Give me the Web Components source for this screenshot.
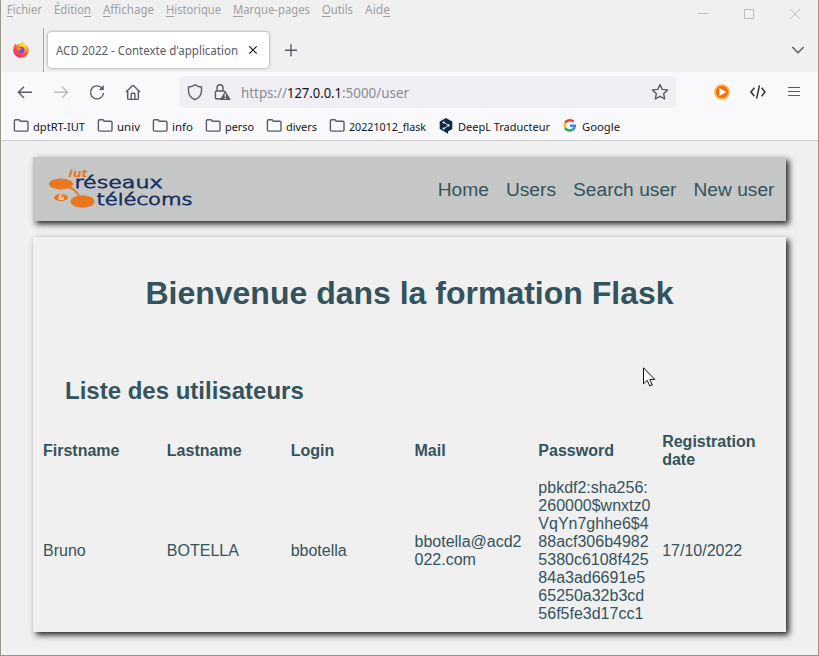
<!DOCTYPE html>
<html lang="fr">
<head>
<meta charset="utf-8">
<title>ACD 2022 - Contexte d'application</title>
<style>
html,body{margin:0;height:100%;overflow:hidden;background:#f0f0f0}
</style>
</head>
<body>
<app-window></app-window>
<script>
const define = (name, html, after) => {
  const tpl = document.createElement('template');
  tpl.innerHTML = html;
  customElements.define(name, class extends HTMLElement {
    connectedCallback() {
      if (this.shadowRoot) return;
      this.attachShadow({mode: 'open'}).append(tpl.content.cloneNode(true));
      if (after) after(this, this.shadowRoot);
    }
  });
};

/* Text run condensed or stretched to the width given by its "w" attribute */
define('fit-text', `<style>
:host{display:inline-block;white-space:pre;flex:none}
span{display:inline-block;transform-origin:0 50%;white-space:pre}
</style><span><slot></slot></span>`, (el, root) => {
  const s = root.querySelector('span');
  const w = +el.getAttribute('w');
  const n = s.getBoundingClientRect().width;
  if (n) s.style.transform = `scaleX(${w / n})`;
  el.style.width = w + 'px';
});

const icons = {
  firefox: [18, `<defs><radialGradient id="g" cx=".72" cy=".15" r=".95"><stop offset="0" stop-color="#fff04a"/><stop offset=".35" stop-color="#ffb02c"/><stop offset=".65" stop-color="#ff5634"/><stop offset="1" stop-color="#f01c80"/></radialGradient></defs><g stroke="none"><path fill="url(#g)" d="M2.6 4 L3.4 2.6 L4.3 4.2 Q6 2.7 8.2 3 Q9.3 1 11.4.6 Q11.4 2.4 13 3.4 L14 4.7 L14.3 3.6 Q17.3 6.8 16.6 10.5 Q15.2 16.6 9 16.7 Q2.8 16.3 1.3 10.7 Q.7 7.4 2.6 4Z"/><circle cx="9.2" cy="9" r="3.300" fill="#7950d8"/><path d="M4.800 7 Q7.500 6 9.600 7.800 Q7.600 8.200 7.400 9.700 Q5.800 9.700 4.800 7Z" fill="#ff9632"/></g>`],
  back: [18, `<path d="M16 9.3H2.5M8 3.7 2.4 9.3 8 14.9"/>`],
  forward: [18, `<path d="M2 9.3h13.5M10 3.7l5.6 5.6-5.6 5.6"/>`],
  reload: [18, `<path d="M14.6 6A6.5 6.5 0 1 0 15.5 10"/><path d="M15.8 2v5h-5z" fill="currentColor" stroke="none"/>`],
  home: [18, `<path d="M2 9.1 8.3 2.8Q9 2.2 9.7 2.8L16 9.1M3.7 8v7.7q0 .7.7.7h9.2q.7 0 .7-.7V8M7.2 16.2v-5q0-1 1-1h1.7q1 0 1 1v5"/>`],
  shield: [18, `<path d="M9 1.7Q11.5 3.7 15.5 4V8Q15.2 14 9 16.7 2.8 14 2.5 8V4Q6.5 3.7 9 1.7Z"/>`],
  lock: [18, `<path d="M9 15.8H3.4q-1 0-1-1V9q0-1 1-1h7.2q1 0 1 1M4 8V4.8a3 3 0 0 1 6 0V8"/><path d="M12.300 7.700 17.800 17H6.800z" fill="currentColor" stroke="none"/><path d="M12.300 10.700v3m0 1v1.200" stroke="#f0f0f4"/>`],
  star: [18, `<path stroke-linejoin="round" d="m9 1.5 2.2 4.900 5.400.6-4 3.700 1.100 5.300L9 13.300 4.300 16l1.100-5.300-4-3.700 5.400-.6z"/>`],
  play: [18, `<circle cx="9" cy="9" r="7.8" fill="#ffb44b" stroke="none"/><circle cx="9" cy="9" r="6.1" fill="#fa6b08" stroke="none"/><path d="M6.3 5 13.4 9 6.3 13z" fill="#fff" stroke="none"/>`],
  code: [18, `<path stroke-width="1.5" d="M5.4 4.8 2 9l3.4 4.2M12.6 4.8 16 9l-3.4 4.2M10.5 2.3 7.6 15.7"/>`],
  menu: [18, `<path stroke-width="1.2" d="M3 4.500h12M3 8.500h12M3 12.500h12"/>`],
  folder: [16, `<path d="M1.4 3Q1.4 1.700 2.600 1.700h3q.8 0 1.100.7l.5.8h6.500q1.300 0 1.300 1.300v7.400q0 1.200-1.300 1.200H2.700q-1.300 0-1.300-1.200z"/>`],
  deepl: [16, `<path d="M8 0 14.300 3.500v7.600L10 13.500l.2 2.400L8 14.600 1.700 11V3.500z" fill="#0f2b46" stroke="none"/><path d="m5.700 4.400 5 3-5 3.200" stroke="#fff" stroke-width=".8"/><g fill="#fff" stroke="none"><circle cx="5.700" cy="4.500" r="1.100"/><circle cx="10.600" cy="7.400" r="1.100"/><circle cx="5.700" cy="10.500" r="1.100"/></g>`],
  google: [16, `<g stroke-width="2.5"><path stroke="#ea4335" d="M3.1 4.7Q4.7 2.2 8 2.2q2.1 0 3.7 1.4"/><path stroke="#fbbc05" d="M3.1 4.7Q1.8 7.3 3.1 9.8"/><path stroke="#34a853" d="M3.1 9.8Q4.7 12.4 8 12.4q2.1 0 3.5-1.1"/><path stroke="#4285f4" d="M11.5 11.3Q12.8 10 12.8 7.8H8"/></g>`],
  plus: [18, `<path d="M9 3.3v12M3 9.3h12"/>`],
  close: [14, `<path stroke="#15141a" stroke-width="1.2" d="m3.3 3.3 7.4 7.4M10.7 3.3l-7.4 7.4"/>`],
  chevron: [16, `<path stroke-width="1.5" d="m2.3 5 5.7 5.7L13.7 5"/>`],
  min: [12, `<path stroke-width="1" d="M1 5.5h10"/>`],
  max: [12, `<path stroke-width="1" d="M1.5 1.5h9v9h-9z"/>`],
  exit: [12, `<path stroke-width="1" d="m1 1 10 10M11 1 1 11"/>`],
};
define('ui-icon', `<style>:host{display:block;flex:none;color:#5b5b66}svg{display:block;overflow:visible}</style>`, (el, root) => {
  const [s, body] = icons[el.getAttribute('name')];
  root.innerHTML += `<svg width="${s}" height="${s}" viewBox="0 0 ${s} ${s}" fill="none" stroke="currentColor" stroke-width="1.4">${body}</svg>`;
});

define('menu-bar', `<style>
:host{display:flex;height:28px;box-sizing:border-box;padding:0 17px 0 6px;justify-content:space-between;color:#a0a0a0;font:12px/20px "Noto Sans",sans-serif}
.items{display:flex;gap:12px}
u{text-decoration-thickness:1px;text-underline-offset:2px}
.win{display:flex;gap:34px;padding-top:8px}
.win ui-icon{color:#bcbcbc}
</style>
<div class="items"><fit-text w="35"><u>F</u>ichier</fit-text><fit-text w="37">Éditio<u>n</u></fit-text><fit-text w="51"><u>A</u>ffichage</fit-text><fit-text w="55"><u>H</u>istorique</fit-text><fit-text w="77"><u>M</u>arque-pages</fit-text><fit-text w="31"><u>O</u>utils</fit-text><fit-text w="25">Aid<u>e</u></fit-text></div>
<div class="win"><ui-icon name="min"></ui-icon><ui-icon name="max"></ui-icon><ui-icon name="exit"></ui-icon></div>`);

define('tab-strip', `<style>
:host{display:flex;height:44px;align-items:center;color:#5b5b66;font:12px/18px "Noto Sans",sans-serif}
.pin{width:43px;height:44px;box-sizing:border-box;border-right:1px solid #aaa;display:grid;place-items:center}
.pin ui-icon{margin-left:-3px}
.tab{width:221px;height:36px;box-sizing:border-box;margin-left:4px;background:#fff;border-radius:4px;box-shadow:0 0 3px rgba(0,0,0,.45);display:flex;align-items:center;padding:0 9px 0 8px;justify-content:space-between}
.tab fit-text{padding-top:2px}
.plus{margin-left:13px}
.list{margin-left:auto;margin-right:12px}
</style>
<div class="pin"><ui-icon name="firefox"></ui-icon></div>
<div class="tab"><fit-text w="182">ACD 2022 - Contexte d'application</fit-text><ui-icon name="close"></ui-icon></div>
<ui-icon class="plus" name="plus"></ui-icon><ui-icon class="list" name="chevron"></ui-icon>`);

define('nav-bar', `<style>
:host{display:flex;height:40px;align-items:center;background:#f9f9fb;padding:0 15px;color:#8b8a94;font:14px/20px "Noto Sans",sans-serif}
.btns{display:flex;gap:18px}
.off{color:#bdbdc2}
.url{width:497px;height:32px;box-sizing:border-box;background:#f0f0f4;border-radius:4px;margin-left:37px;padding:0 7px;display:flex;align-items:center;gap:9px}
.addr{display:flex;flex:1;padding:2px 0 0 1px}
b{font-weight:400;color:#15141a}
.tools{display:flex;gap:18px;margin-left:auto}
.dark{color:#333}
</style>
<div class="btns"><ui-icon name="back"></ui-icon><ui-icon class="off" name="forward"></ui-icon><ui-icon name="reload"></ui-icon><ui-icon name="home"></ui-icon></div>
<div class="url"><ui-icon name="shield"></ui-icon><ui-icon name="lock"></ui-icon><div class="addr"><fit-text w="46">https://</fit-text><fit-text w="55"><b>127.0.0.1</b></fit-text><fit-text w="67">:5000/user</fit-text></div><ui-icon name="star"></ui-icon></div>
<div class="tools"><ui-icon name="play"></ui-icon><ui-icon class="dark" name="code"></ui-icon><ui-icon name="menu"></ui-icon></div>`);

define('book-mark', `<style>:host{display:flex;align-items:center;gap:4px}::slotted(fit-text){padding-top:2px}</style><slot name="icon"></slot><slot></slot>`);

const marks = [['folder','dptRT-IUT',52],['folder','univ',23],['folder','info',21],['folder','perso',29],['folder','divers',31],['folder','20221012_flask',77],['deepl','DeepL Traducteur',92],['google','Google',38]];
define('bookmarks-bar', `<style>
:host{display:flex;height:29px;box-sizing:border-box;padding:1px 12px 2px;gap:12px;align-items:center;background:#f9f9fb;border-bottom:1px solid #ccc;color:#15141a;font:11.6px/18px "Noto Sans",sans-serif}
</style>`, (el, root) => {
  root.innerHTML += marks.map(([i, t, w]) => `<book-mark><ui-icon slot="icon" name="${i}"></ui-icon><fit-text w="${w}">${t}</fit-text></book-mark>`).join('');
});

define('rt-logo', `<style>:host{display:block}svg{display:block}text{font-family:"DejaVu Sans",sans-serif}.thin{font-weight:200}</style>
<svg width="148" height="44" viewBox="47 167 148 44">
<g fill="#e87722"><ellipse cx="61" cy="184" rx="12" ry="5.4"/><ellipse cx="82.500" cy="201.500" rx="12" ry="6.200"/><ellipse cx="61" cy="197.500" rx="7" ry="3.600"/>
<path d="M68 187 Q76 189 80 198" fill="none" stroke="#e87722" stroke-width="2"/>
<text x="68.500" y="177" font-size="10" font-weight="bold" font-style="italic" textLength="19" lengthAdjust="spacingAndGlyphs">iut</text></g>
<text x="58" y="200.300" font-size="7.500" font-weight="bold" fill="#ddd" textLength="6.500" lengthAdjust="spacingAndGlyphs">&amp;</text>
<g class="thin" fill="#1c3263" stroke="#1c3263" stroke-width=".9"><text x="74.500" y="188.200" font-size="15" textLength="88" lengthAdjust="spacingAndGlyphs">réseaux</text>
<text x="96.500" y="205.200" font-size="15" textLength="96" lengthAdjust="spacingAndGlyphs">télécoms</text></g>
</svg>`);

define('site-header', `<style>
:host{display:flex;height:64px;box-sizing:border-box;align-items:center;justify-content:space-between;padding:0 11.500px 0 14px;background:#c5c7c6;box-shadow:3px 3px 6px #222;font-size:19.2px}
nav{display:flex;gap:17px;padding-top:2px}
</style><rt-logo></rt-logo><nav><span>Home</span><span>Users</span><span>Search user</span><span>New user</span></nav>`);

define('user-table', `<style>
:host{display:grid;grid-template-columns:repeat(6,1fr);column-gap:10px;row-gap:10px;align-items:center;font-size:16px;line-height:18px;word-break:break-all}
b{word-break:normal}
</style>
<b>Firstname</b><b>Lastname</b><b>Login</b><b>Mail</b><b>Password</b><b>Registration date</b>
<span>Bruno</span><span>BOTELLA</span><span>bbotella</span><span>bbotella@acd2022.com</span><span>pbkdf2:sha256:260000$wnxtz0VqYn7ghhe6$488acf306b49825380c6108f42584a3ad6691e565250a32b3cd56f5fe3d17cc1</span><span>17/10/2022</span>`);

define('site-main', `<style>
:host{display:block;height:395px;box-sizing:border-box;margin-top:16px;padding:38px 10px 0;background:#f0f0f0;box-shadow:3px 3px 6px #222}
h1{margin:0;font-size:32px;line-height:36px;text-align:center}
h2{margin:66px 0 28px 22px;font-size:24px;line-height:28px}
</style><h1>Bienvenue dans la formation Flask</h1><h2>Liste des utilisateurs</h2><user-table></user-table>`);

define('mouse-pointer', `<style>:host{position:absolute;left:642px;top:367px}svg{display:block}</style>
<svg width="13" height="20"><path d="M.5.8v16l3.700-3.500 2.600 5.700 2.500-1-2.500-5.600h5z" fill="#fff" stroke="#111" stroke-width="1"/></svg>`);

define('app-window', `<style>
:host{display:block;position:relative;width:819px;height:656px;box-sizing:border-box;border:solid #99968a;border-width:0 1px 1px;background:#f0f0f0}
.page{padding:16px 32px 0;color:#34535c;font-family:"Liberation Sans",Arial,sans-serif}
</style>
<menu-bar></menu-bar><tab-strip></tab-strip><nav-bar></nav-bar><bookmarks-bar></bookmarks-bar>
<div class="page"><site-header></site-header><site-main></site-main></div>
<mouse-pointer></mouse-pointer>`);
</script>
</body>
</html>
